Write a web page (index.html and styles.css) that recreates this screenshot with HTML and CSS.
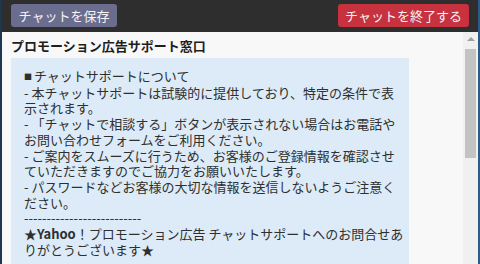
FILE: index.html
```html
<!DOCTYPE html>
<html lang="ja">
<head>
<meta charset="utf-8">
<link rel="stylesheet" href="styles.css">
</head>
<body>
<div class="frame">
  <header class="topbar">
    <button class="btn btn-save">チャットを保存</button>
    <button class="btn btn-end">チャットを終了する</button>
  </header>
  <div class="main">
    <div class="content">
      <h1 class="title">プロモーション広告サポート窓口</h1>
      <div class="notice">
        <p class="line"><span class="sq">■</span>チャットサポートについて</p>
        <p class="line">- 本チャットサポートは試験的に提供しており、特定の条件で表<br>示されます。</p>
        <p class="line">- 「チャットで相談する」ボタンが表示されない場合はお電話や<br>お問い合わせフォームをご利用ください。</p>
        <p class="line">- ご案内をスムーズに行うため、お客様のご登録情報を確認させ<br>ていただきますのでご協力をお願いいたします。</p>
        <p class="line">- パスワードなどお客様の大切な情報を送信しないようご注意く<br>ださい。</p>
        <p class="line dashes">--------------------------</p>
        <p class="line">★<span class="yahoo">Yahoo</span>！プロモーション広告 チャットサポートへのお問合せあ<br>りがとうございます★</p>
      </div>
    </div>
    <div class="scrollbar">
      <div class="arrow"></div>
      <div class="thumb"></div>
    </div>
  </div>
</div>
</body>
</html>
```
FILE: styles.css
```css
* { box-sizing: border-box; }
html, body {
  margin: 0;
  padding: 0;
  width: 480px;
  height: 264px;
  overflow: hidden;
  background: #f8f8f8;
  font-family: "Noto Sans CJK JP", "Noto Sans", sans-serif;
}
.frame {
  width: 480px;
  height: 264px;
  display: flex;
  flex-direction: column;
  border-left: 2px solid #1d3752;
  border-right: 2px solid #2d5a86;
}
.topbar {
  height: 32px;
  flex: none;
  background: #2e2e2e;
  display: flex;
  justify-content: space-between;
  align-items: flex-start;
  padding: 4px 9px 0 9px;
}
.btn {
  font-family: inherit;
  font-size: 13px;
  line-height: 23px;
  height: 23px;
  border: none;
  border-radius: 3px;
  color: #f4f4f8;
  padding: 0 7px;
  margin: 0;
}
.btn-save { background: #6a6d8e; width: 106px; }
.btn-end { background: #c7323e; width: 131px; }
.main {
  flex: 1;
  display: flex;
  min-height: 0;
}
.content {
  flex: 1;
  background: #f8f8f8;
  padding: 6px 0 0 9px;
  overflow: hidden;
}
.title {
  margin: 0;
  font-size: 13px;
  font-weight: bold;
  line-height: 16px;
  color: #1e1e1e;
}
.notice {
  margin-top: 4px;
  width: 398px;
  height: 300px;
  background: #dcebf7;
  padding: 10px 0 0 13px;
  color: #2f2f2f;
  font-size: 13px;
  line-height: 15.7px;
}
.line {
  margin: 0;
  white-space: nowrap;
}
.sq {
  font-size: 8px;
  margin-right: 2px;
  vertical-align: 1px;
}
.yahoo { font-weight: bold; }
.scrollbar {
  width: 15px;
  flex: none;
  background: #f0f0f0;
  display: flex;
  flex-direction: column;
  align-items: center;
}
.arrow {
  margin-top: 5px;
  width: 0;
  height: 0;
  border-left: 4px solid transparent;
  border-right: 4px solid transparent;
  border-bottom: 4px solid #a0a0a0;
}
.thumb {
  margin-top: 8px;
  width: 11px;
  height: 109px;
  background: #c3c3c3;
}
```
